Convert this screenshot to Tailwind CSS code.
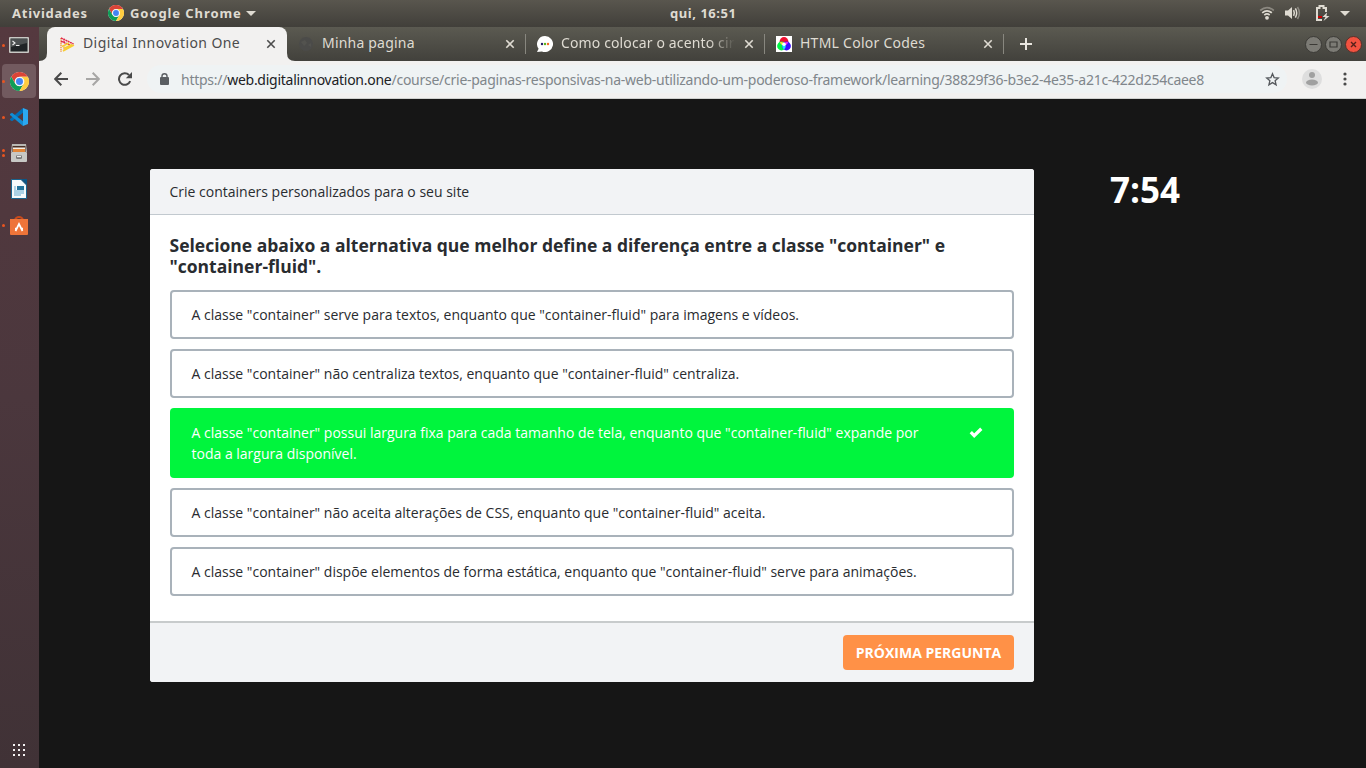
<!DOCTYPE html>
<html lang="pt-BR">
<head>
<meta charset="utf-8">
<title>Digital Innovation One</title>
<script src="https://cdn.jsdelivr.net/npm/@tailwindcss/browser@4"></script>
</head>
<body class="w-[1366px] h-[768px] overflow-hidden bg-[#161616] flex flex-col font-['Open_Sans','Noto_Sans',sans-serif]">
<svg class="hidden">
  <symbol id="chrome" viewBox="0 0 48 48">
    <circle cx="24" cy="24" r="24" fill="#fff"/>
    <path d="M24 12H44.8A24 24 0 0 0 3.2 12L13.6 30A12 12 0 0 1 24 12Z" fill="#db4437"/>
    <path d="M13.6 30 3.2 12A24 24 0 0 0 24 48L34.4 30A12 12 0 0 1 13.6 30Z" fill="#0f9d58"/>
    <path d="M34.4 30 24 48A24 24 0 0 0 44.8 12H24A12 12 0 0 1 34.4 30Z" fill="#ffcd40"/>
    <circle cx="24" cy="24" r="11" fill="#f1f1f1"/><circle cx="24" cy="24" r="8.8" fill="#4285f4"/>
  </symbol>
  <symbol id="close" viewBox="0 0 10 10"><path d="M1.3 1.3 8.7 8.7M8.7 1.3 1.3 8.7" stroke="currentColor" stroke-width="1.6" fill="none"/></symbol>
</svg>

<!-- System bar -->
<header class="h-[27px] shrink-0 flex items-center bg-linear-to-b from-[#59564e] to-[#413f3a] text-[#dfdbd2] text-[13px] font-bold font-['Noto_Sans',sans-serif] leading-[27px] pb-px">
  <div class="w-[108px] pl-3 whitespace-nowrap tracking-[0.75px]">Atividades</div>
  <svg class="size-4 mr-[6px]"><use href="#chrome"/></svg>
  <div class="w-[116px] whitespace-nowrap tracking-[0.92px]">Google Chrome</div>
  <svg class="w-[10px] h-[5px]" viewBox="0 0 10 5"><path d="M0 0H10L5 5Z" fill="#dfdbd2"/></svg>
  <div class="ml-[414px] w-[70px] whitespace-nowrap tracking-[0.55px]">qui, 16:51</div>
  <div class="flex items-center ml-auto mr-[16px]">
    <svg class="w-4 h-[14px] mr-[10px]" viewBox="0 0 16 14" fill="none" stroke-width="1.7"><path d="M1.2 4.5Q8-1.3 14.8 4.5" stroke="#8b8880"/><path d="M3.2 6.8Q8 2.8 12.8 6.8M5.3 9.1Q8 6.8 10.7 9.1" stroke="#dfdbd2"/><circle cx="8" cy="11.8" r="1.9" fill="#dfdbd2"/></svg>
    <svg class="w-4 h-[14px] mr-[14px]" viewBox="0 0 16 14" fill="none" stroke-width="1.5"><path d="M0 4.5H3L7 1V13L3 9.5H0Z" fill="#dfdbd2"/><path d="M8.6 4.2Q10 7 8.6 9.8M10.4 2.4Q13 7 10.4 11.6" stroke="#dfdbd2"/><path d="M12.5 1Q16.3 7 12.5 13" stroke="#8b8880"/></svg>
    <svg class="w-[15px] h-[16px] mr-[10px]" viewBox="0 0 15 16"><path d="M7 15H2V3H4.5V1H8.5V3H11V7" fill="none" stroke="#dfdbd2" stroke-width="2"/><path d="M3 11H7V13H3Z" fill="#c00"/><path d="M12 7.5 7.5 12H10.5L8.5 16 14.5 11H11.5Z" fill="#dfdbd2"/></svg>
    <svg class="w-[10px] h-[5px]" viewBox="0 0 10 5"><path d="M0 0H10L5 5Z" fill="#dfdbd2"/></svg>
  </div>
</header>

<div class="flex flex-1 min-h-0">
  <!-- Dock -->
  <aside class="w-[39px] pr-px shrink-0 bg-linear-to-b from-[#55393f] via-[#4b373d] to-[#403236] flex flex-col items-center">
    <div class="w-full h-9 flex items-center">
      <i class="size-[3px] rounded-full bg-[#e95420] ml-[2px] mr-1"></i>
      <svg class="w-5 h-4" viewBox="0 0 20 16"><rect width="20" height="16" rx="1" fill="#c9c9c5"/><rect x="1.5" y="1.5" width="17" height="13" fill="#202426"/><path d="M2 2H18V6L2 10Z" fill="#4c5051"/><path d="M3.5 4 6 6 3.5 8M7 8.5H10.5" stroke="#eee" stroke-width="1.1" fill="none"/></svg>
    </div>
    <div class="w-[34px] h-[34px] mt-px mb-[1px] rounded bg-[#725a5f] flex items-center">
      <i class="size-[3px] rounded-full bg-[#e95420] mr-[5px]"></i>
      <svg class="size-[19px]"><use href="#chrome"/></svg>
    </div>
    <div class="w-full h-9 flex items-center">
      <i class="size-[3px] rounded-full bg-[#e95420] ml-[2px] mr-[5px]"></i>
      <svg class="size-[18px]" viewBox="0 0 18 18"><path d="M13 0V4.8L2 13.2 0 12V11L13 0Z" fill="#0070b8"/><path d="M13 18V13.2L2 4.8 0 6V7L13 18Z" fill="#118dd4"/><path d="M13 0 18 2V16L13 18Z" fill="#2ba8f0"/></svg>
    </div>
    <div class="w-full h-9 flex items-center">
      <span class="flex flex-col gap-[2px] ml-[2px] mr-[6px]"><i class="size-[3px] rounded-full bg-[#e95420]"></i><i class="size-[3px] rounded-full bg-[#e95420]"></i></span>
      <svg class="w-4 h-[18px]" viewBox="0 0 16 18"><path d="M1 0H15L16 8H0Z" fill="#b9b8b4"/><path d="M1.5 2H14.5V8H1.5Z" fill="#4b3026"/><path d="M2 3.5H14V5H2Z" fill="#f5eee4"/><path d="M2 5H14V8H2Z" fill="#e28538"/><rect y="8" width="16" height="10" rx="1" fill="#c8c8c5"/><rect x="5" y="11" width="6" height="4" rx="1.5" fill="#777"/><rect x="6" y="11.7" width="4" height="1.5" fill="#eee"/></svg>
    </div>
    <div class="w-full h-9 flex items-center pl-[11px]">
      <svg class="w-4 h-5" viewBox="0 0 16 20"><path d="M.5.5H10L15.5 6V19.5H.5Z" fill="#f5f9fb" stroke="#18648f"/><path d="M10 0H16V6Z" fill="#0a5687"/><path d="M3 8H5M3 10H5M3 12H13M3 14H13M3 16H10" stroke="#60a9cf"/><rect x="6" y="7" width="7" height="4" fill="#23749d"/></svg>
    </div>
    <div class="w-full h-9 flex items-center">
      <i class="size-[3px] rounded-full bg-[#e95420] ml-[2px] mr-[5px]"></i>
      <svg class="w-[18px] h-[19px]" viewBox="0 0 18 19"><path d="M5 4Q6 1 9 1T13 4" fill="none" stroke="#c84a1c" stroke-width="2"/><path d="M0 3H18V18Q18 19 17 19H1Q0 19 0 18Z" fill="#ee7439"/><path d="M5.5 15 9 8 12.5 15M5 12.6H7.3M10.7 12.6H13" fill="none" stroke="#fff" stroke-width="1.7"/></svg>
    </div>
    <svg class="size-3 mt-auto mb-3" viewBox="0 0 12 12" fill="#f4f2f2"><path d="M0 0h2v2H0zM5 0h2v2H5zM10 0h2v2h-2zM0 5h2v2H0zM5 5h2v2H5zM10 5h2v2h-2zM0 10h2v2H0zM5 10h2v2H5zM10 10h2v2h-2z"/></svg>
  </aside>

  <main class="flex-1 flex flex-col min-w-0">
    <!-- Tab strip -->
    <nav class="h-[34px] shrink-0 flex items-center bg-linear-to-b from-[#5b5a51] to-[#42413c] text-[#dfdbd2] text-[14px] font-['Noto_Sans',sans-serif] leading-[20px]">
      <svg class="w-2 h-2 self-end shrink-0" viewBox="0 0 8 8"><path d="M0 8Q8 8 8 0V8Z" fill="#f2f1f0"/></svg>
      <div class="w-[240px] shrink-0 h-full bg-[#f2f1f0] rounded-t-lg text-[#4c4c4c] flex items-center">
        <svg class="size-[15px] ml-[13px] mr-2" viewBox="0 0 15 15" fill="none" stroke-width="1.5"><path d="M1 1V15M4 8V13" stroke="#f39a4a" stroke-dasharray="1.5 .7"/><path d="M1 1 13.5 7M1 4.2 10 8M4 1.5V6" stroke="#e32646" stroke-dasharray="2 .5"/><path d="M3 14 14 8M4 11.5 12 7.3M2 9.5 9 6" stroke="#f7cd32"/></svg>
        <span class="w-[180px] pb-[2px] whitespace-nowrap tracking-[0.4px]">Digital Innovation One</span>
        <svg class="size-[10px] ml-[3px]"><use href="#close"/></svg>
      </div>
      <svg class="w-2 h-2 self-end shrink-0" viewBox="0 0 8 8"><path d="M8 8Q0 8 0 0V8Z" fill="#f2f1f0"/></svg>
      <div class="w-[231px] shrink-0 flex items-center">
        <svg class="size-[14px] ml-[4px] mr-[9px]" viewBox="0 0 14 14"><circle cx="7" cy="7" r="7" fill="#4b4b49"/><path d="M2 5 6 3 8 6 5 9ZM9 8 12 6V10Z" fill="#53534f"/></svg>
        <span class="w-[183px] pb-[2px] whitespace-nowrap tracking-[0.2px]">Minha pagina</span>
        <svg class="size-[10px]"><use href="#close"/></svg>
        <i class="w-px h-5 bg-[#88877f] ml-[10px]"></i>
      </div>
      <div class="w-[239px] shrink-0 flex items-center">
        <svg class="size-4 ml-[11px] mr-2" viewBox="0 0 16 16"><path d="M8 0a8 8 0 1 1-3 15.4L0 16 1.6 12.7A8 8 0 0 1 8 0Z" fill="#fff"/><circle cx="5" cy="8" r="1.2" fill="#241b68"/><circle cx="8" cy="8" r="1.2" fill="#59b51d"/><circle cx="11" cy="8" r="1.2" fill="#f36b23"/></svg>
        <span class="w-[174px] pb-[2px] whitespace-nowrap tracking-[0.13px] mask-r-from-85% mask-r-to-100%">Como colocar o acento cir</span>
        <svg class="size-[10px] ml-[9px]"><use href="#close"/></svg>
        <i class="w-px h-5 bg-[#88877f] ml-[10px]"></i>
      </div>
      <div class="w-[240px] shrink-0 flex items-center">
        <svg class="size-4 ml-[11px] mr-2" viewBox="0 0 16 16"><path fill="#fff" d="M0 0H16V16H0Z"/><circle cx="8" cy="5.500" r="4.400" fill="#f01030"/><circle cx="5.500" cy="10" r="4.400" fill="#00f545"/><circle cx="10.500" cy="10" r="4.400" fill="#3a10ff"/><path d="M8 6.500A4.400 4.400 0 0 1 8 13.500 4.400 4.400 0 0 1 8 6.500Z" fill="#19e8ff"/><path d="M4 6Q6 5.500 8 7L6 9Q4 8 4 6Z" fill="#ffd83a"/><path d="M12 6Q10 5.500 8 7L10 9Q12 8 12 6Z" fill="#f42bf0"/><circle cx="8" cy="8.300" r="1.800" fill="#fff"/></svg>
        <span class="w-[183px] pb-[2px] whitespace-nowrap tracking-[0.25px]">HTML Color Codes</span>
        <svg class="size-[10px]"><use href="#close"/></svg>
        <i class="w-px h-5 bg-[#88877f] ml-[10px]"></i>
      </div>
      <svg class="size-3 ml-[15px]" viewBox="0 0 12 12"><path d="M6 0V12M0 6H12" stroke="#e8e5df" stroke-width="2"/></svg>
      <div class="flex gap-[3px] ml-auto mr-[4px]">
        <svg class="size-[17px]" viewBox="0 0 17 17"><circle cx="8.5" cy="8.5" r="8" fill="#7c7b75" stroke="#3b3a36"/><path d="M4.500 8.500H12.500" stroke="#3b3a36"/></svg>
        <svg class="size-[17px]" viewBox="0 0 17 17"><circle cx="8.5" cy="8.5" r="8" fill="#7c7b75" stroke="#3b3a36"/><path d="M5 6H12V11H5Z" fill="none" stroke="#3b3a36" stroke-width="1.200"/></svg>
        <svg class="size-[17px]" viewBox="0 0 17 17"><circle cx="8.5" cy="8.5" r="8" fill="#f15240" stroke="#57302a"/><path d="M6 6 11 11M11 6 6 11" stroke="#54211a" stroke-width="1.4"/></svg>
      </div>
    </nav>

    <!-- Address bar -->
    <div class="h-[38px] shrink-0 bg-[#f2f1f0] border-b border-[#cfd1cf] flex items-center pb-px">
      <svg class="w-[14px] h-[14px] ml-[15px]" viewBox="0 0 14 14" fill="none" stroke="#4a4a4a" stroke-width="2"><path d="M14 7H1.5M7.3.7 1.2 7 7.3 13.3"/></svg>
      <svg class="w-[14px] h-[14px] ml-[18px]" viewBox="0 0 14 14" fill="none" stroke="#a7a6a5" stroke-width="2"><path d="M0 7H12.5M6.7.7 12.8 7 6.7 13.3"/></svg>
      <svg class="size-[14px] ml-[18px]" viewBox="0 0 14 14"><path d="M12.2 9.2A5.8 5.8 0 1 1 11 3" fill="none" stroke="#4a4a4a" stroke-width="2"/><path d="M14 0V6.2H7.8Z" fill="#4a4a4a"/></svg>
      <div class="h-7 w-[1140px] ml-[15px] rounded-full bg-[#eff3f4] flex items-center">
        <svg class="w-[9px] h-3 ml-[13px] mr-[12px]" viewBox="0 0 9 12"><rect y="4" width="9" height="8" rx="1" fill="#5a5e62"/><path d="M2 4V3Q2 .8 4.500.8T7 3V4" fill="none" stroke="#5a5e62" stroke-width="1.4"/></svg>
        <div class="w-[1084px] whitespace-nowrap text-[14px] text-[#80868b] font-['Noto_Sans',sans-serif] tracking-[-0.261px]">https://<span class="text-[#202124]">web.digitalinnovation.one</span>/course/crie-paginas-responsivas-na-web-utilizando-um-poderoso-framework/learning/38829f36-b3e2-4e35-a21c-422d254caee8</div>
        <svg class="size-[15px]" viewBox="0 0 15 15"><path d="M7.5 1.8 9.1 5.6 13.3 6 10.1 8.700 11.100 12.800 7.500 10.600 3.900 12.800 4.900 8.700 1.700 6 5.900 5.600Z" fill="none" stroke="#55595d" stroke-width="1.300"/></svg>
      </div>
      <svg class="size-5 ml-[15px]" viewBox="0 0 20 20"><circle cx="10" cy="10" r="10" fill="#dedede"/><circle cx="10" cy="6" r="3" fill="#a0a0a0"/><ellipse cx="10" cy="13.500" rx="6" ry="3" fill="#a0a0a0"/></svg>
      <svg class="w-1 h-[14px] ml-[21px]" viewBox="0 0 4 14" fill="#4a4a4a"><circle cx="2" cy="2" r="1.600"/><circle cx="2" cy="7" r="1.600"/><circle cx="2" cy="12" r="1.600"/></svg>
    </div>

    <!-- Quiz -->
    <div class="flex-1 bg-[#161616] flex items-start pl-[111px] pt-[70px]">
      <section class="w-[884px] h-[513px] bg-white rounded-[3px] overflow-hidden flex flex-col text-[#292c30] text-[14px] leading-[21px]">
        <div class="h-[46px] shrink-0 bg-[#f2f3f5] border-b border-[#c2c9cf] px-[19.500px] flex items-center">Crie containers personalizados para o seu site</div>
        <div class="flex-1 px-5 pt-5">
          <h1 class="-ml-[0.500px] text-[17.500px] leading-[21px] font-bold">Selecione abaixo a alternativa que melhor define a diferença entre a classe "container" e "container-fluid".</h1>
          <ul class="mt-[13px] flex flex-col gap-[10px]">
            <li class="h-[49px] border-2 border-[#a9b2ba] rounded-[4px] px-[19.500px] py-3">A classe "container" serve para textos, enquanto que "container-fluid" para imagens e vídeos.</li>
            <li class="h-[49px] border-2 border-[#a9b2ba] rounded-[4px] px-[19.500px] py-3">A classe "container" não centraliza textos, enquanto que "container-fluid" centraliza.</li>
            <li class="h-[70px] bg-[#00f53d] rounded-[4px] pl-[21.500px] pr-[31px] py-[14px] text-white flex justify-between">
              <span class="w-[742px]">A classe "container" possui largura fixa para cada tamanho de tela, enquanto que "container-fluid" expande por toda a largura disponível.</span>
              <svg class="w-[14px] h-[11px] mt-[5px]" viewBox="0 0 14 11"><path d="M1.800 5.200 5.200 8.600 12.300 1.800" fill="none" stroke="#fff" stroke-width="3.300"/></svg>
            </li>
            <li class="h-[49px] border-2 border-[#a9b2ba] rounded-[4px] px-[19.500px] py-3">A classe "container" não aceita alterações de CSS, enquanto que "container-fluid" aceita.</li>
            <li class="h-[49px] border-2 border-[#a9b2ba] rounded-[4px] px-[19.500px] py-3">A classe "container" dispõe elementos de forma estática, enquanto que "container-fluid" serve para animações.</li>
          </ul>
        </div>
        <div class="h-[61px] shrink-0 bg-[#f2f3f5] border-t-2 border-[#c8cbcc] px-5 flex items-center justify-end">
          <button class="w-[171px] h-[35px] rounded-[4px] bg-[#ff9147] text-white font-bold text-[14px] whitespace-nowrap">PRÓXIMA PERGUNTA</button>
        </div>
      </section>
      <div class="ml-[76px] -mt-[4px] text-white font-bold text-[35px] leading-[50px]">7:54</div>
    </div>
  </main>
</div>
</body>
</html>
